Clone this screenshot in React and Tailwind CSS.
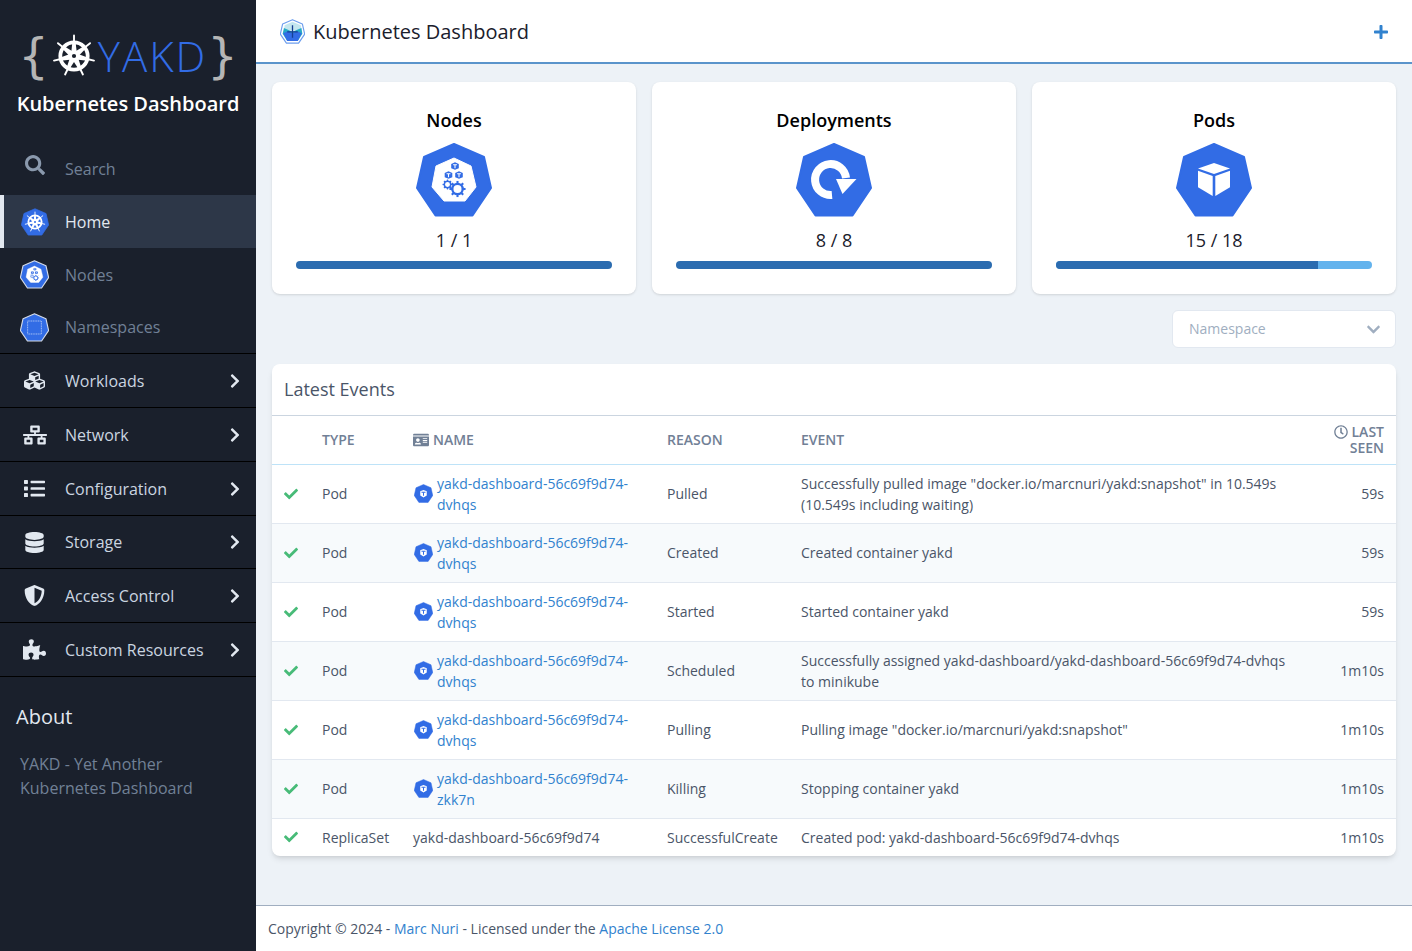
import React from "react";
import { FaSearch, FaCubes, FaNetworkWired, FaList, FaDatabase, FaShieldAlt, FaPuzzlePiece, FaChevronRight, FaCheck, FaIdCard, FaRegClock, FaPlus, FaChevronDown } from "react-icons/fa";

const HEPT = "M38 1 L68 14 L75 45 L56.5 72.5 L19.5 72.5 L1 45 L8 14 Z";
const BLUE = "#326ce5";

function Hept({ className, children, outline }) {
  return (
    <svg viewBox="0 0 76 74" className={className}>
      <path d={HEPT} fill={BLUE} stroke={outline ? "#d5dce8" : BLUE} strokeWidth={outline ? 3 : 2} strokeLinejoin="round" />
      {children}
    </svg>
  );
}

function Wheel({ cx, cy, r, color = "#fff", hole = BLUE }) {
  const spokes = [0, 1, 2, 3, 4, 5, 6].map((i) => {
    const a = (i * 2 * Math.PI) / 7 - Math.PI / 2;
    return { x: Math.cos(a), y: Math.sin(a), px: -Math.sin(a), py: Math.cos(a) };
  });
  return (
    <g strokeLinecap="round">
      <circle cx={cx} cy={cy} r={r * 0.72} fill="none" stroke={color} strokeWidth={r * 0.2} />
      {spokes.map((s, i) => (
        <g key={i}>
          <path
            fill={color}
            d={`M${cx + s.px * r * 0.17} ${cy + s.py * r * 0.17} L${cx + s.x * r * 0.75 + s.px * r * 0.08} ${cy + s.y * r * 0.75 + s.py * r * 0.08} L${cx + s.x * r * 0.75 - s.px * r * 0.08} ${cy + s.y * r * 0.75 - s.py * r * 0.08} L${cx - s.px * r * 0.17} ${cy - s.py * r * 0.17} Z`}
          />
          <line x1={cx + s.x * r * 0.7} y1={cy + s.y * r * 0.7} x2={cx + s.x * r * 1.08} y2={cy + s.y * r * 1.08} stroke={color} strokeWidth={r * 0.1} />
        </g>
      ))}
      <circle cx={cx} cy={cy} r={r * 0.3} fill={color} />
      <circle cx={cx} cy={cy} r={r * 0.11} fill={hole} />
    </g>
  );
}

function Gear({ cx, cy, r }) {
  const teeth = [0, 1, 2, 3, 4, 5, 6, 7];
  return (
    <g stroke={BLUE} fill="none">
      <circle cx={cx} cy={cy} r={r} strokeWidth={r * 0.45} />
      {teeth.map((i) => {
        const a = (i * Math.PI) / 4;
        return <line key={i} x1={cx + Math.cos(a) * r} y1={cy + Math.sin(a) * r} x2={cx + Math.cos(a) * r * 1.55} y2={cy + Math.sin(a) * r * 1.55} strokeWidth={r * 0.4} />;
      })}
    </g>
  );
}

function Cube({ cx, cy, s }) {
  return (
    <g>
      <path d={`M${cx} ${cy - s} L${cx + s} ${cy - s * 0.5} L${cx + s} ${cy + s * 0.6} L${cx} ${cy + s} L${cx - s} ${cy + s * 0.6} L${cx - s} ${cy - s * 0.5} Z`} fill={BLUE} />
      <path d={`M${cx - s * 0.5} ${cy - s * 0.35} H${cx + s * 0.5} M${cx} ${cy - s * 0.35} V${cy + s * 0.6}`} stroke="#fff" strokeWidth={s * 0.28} fill="none" />
    </g>
  );
}

function NodeInner() {
  return (
    <g>
      <path d="M38 15 L55 23 L60 44 L49 58 L28 58 L16 44 L20 23 Z" fill="#fff" stroke="#fff" strokeLinejoin="round" />
      <Cube cx={39} cy={23} s={3.8} />
      <Cube cx={32.5} cy={32} s={3.8} />
      <Cube cx={43} cy={32} s={3.8} />
      <Gear cx={31.5} cy={41.5} r={3.2} />
      <Gear cx={41.5} cy={46} r={5.2} />
    </g>
  );
}

function DeployInner() {
  return (
    <g>
      <path d="M36 52 A15.5 15.5 0 1 1 50 35" fill="none" stroke="#fff" strokeWidth="8" />
      <path d="M40 36 L60.5 36 L46.5 51 Z" fill="#fff" />
    </g>
  );
}

function PodInner() {
  return (
    <g fill="#fff">
      <path d="M38 20 L54 25.5 L38 31 L22 25.5 Z" />
      <path d="M22 27.7 L36.7 33 L36.7 53 L22 44.3 Z" />
      <path d="M54 27.7 L39.3 33 L39.3 53 L54 44.3 Z" />
    </g>
  );
}

function PodSmall() {
  return (
    <svg viewBox="0 0 76 74" className="w-[19px] h-[19px] shrink-0">
      <path d={HEPT} fill={BLUE} stroke={BLUE} strokeWidth="2" strokeLinejoin="round" />
      <g fill="#fff">
        <path d="M38 23 L51 28 L51 45 L38 53 L25 45 L25 28 Z" />
      </g>
      <path d="M30 32 H46 M38 32 V46" stroke={BLUE} strokeWidth="4" fill="none" />
    </svg>
  );
}

function HeaderLogo() {
  return (
    <svg viewBox="0 0 76 74" className="w-[25px] h-[25px]">
      <path d={HEPT} fill="#fff" stroke="#6d9eee" strokeWidth="3.5" strokeLinejoin="round" />
      <path d="M38 7 L63 18 L66 34 L12 34 L14 18 Z" fill="#c3e6ef" />
      <path d="M12 26 L38 38 L65 26 L68 44 L54 66 L22 66 L8 44 Z" fill="#26a9c6" />
      <path d="M10 42 L24 36 L38 42 L52 36 L66 42 L54 66 L22 66 Z" fill={BLUE} />
      <path d="M38 18 V56 M22 38 H54" stroke="#173f94" strokeWidth="4" fill="none" />
    </svg>
  );
}

function LogoWheel() {
  return (
    <svg viewBox="0 0 44 44" className="w-[44px] h-[44px] shrink-0">
      <Wheel cx={22} cy={22} r={19} hole="#1a202c" />
    </svg>
  );
}

function NavLink({ icon, label, active, h = "h-[53px]" }) {
  return (
    <div className={`flex items-center ${h} ${active ? "bg-[#2d3748] border-l-4 border-[#e2e8f0] pl-4" : "pl-5"} `}>
      <div className="w-[29px] flex justify-center items-center shrink-0">{icon}</div>
      <span className={`ml-4 text-base ${active ? "text-[#e2e8f0]" : "text-[#718096]"}`}>{label}</span>
    </div>
  );
}

function NavGroup({ icon, label, h = "h-[54px]" }) {
  return (
    <div className={`flex items-center ${h} pl-5 pr-[13px] border-t border-black`}>
      <div className="w-[29px] flex justify-center items-center shrink-0 text-[#e2e8f0]">{icon}</div>
      <span className="ml-4 text-base text-[#cbd5e0]">{label}</span>
      <FaChevronRight className="ml-auto text-[#e2e8f0] text-[16px]" />
    </div>
  );
}

function Sidebar() {
  return (
    <aside className="w-64 shrink-0 bg-[#1a202c] flex flex-col">
      <div className="pt-[29px] flex flex-col items-center">
        <div className="flex items-center h-[54px] font-['DejaVu_Sans',sans-serif] leading-none">
          <span className="text-[#b5b5b5] text-[48px] font-normal mr-[3px]">{"{"}</span>
          <LogoWheel />
          <span className="text-[#326ce5] text-[42px] font-['Open_Sans',sans-serif] font-light tracking-[2px] ml-[2px]">YAKD</span>
          <span className="text-[#b5b5b5] text-[48px] font-normal">{"}"}</span>
        </div>
        <div className="text-white text-[20px] font-semibold mt-[7px] leading-7">Kubernetes Dashboard</div>
      </div>
      <nav className="mt-[24px]">
        <div className="flex items-center h-[53px] pl-5">
          <div className="w-[29px] flex justify-center"><FaSearch className="text-[#8a99ad] text-[20px] -mt-2" /></div>
          <span className="ml-4 text-base text-[#718096]">Search</span>
        </div>
        <NavLink active label="Home" icon={<Hept className="w-[28px] h-[28px]"><Wheel cx={38} cy={37} r={25} /></Hept>} />
        <NavLink label="Nodes" icon={<Hept outline className="w-[29px] h-[29px]"><NodeInner /></Hept>} />
        <NavLink h="h-[52px]" label="Namespaces" icon={<Hept outline className="w-[29px] h-[29px]"><rect x="20" y="20" width="36" height="34" fill="none" stroke="#a9c2f3" strokeWidth="2.5" strokeDasharray="3 1.5" /></Hept>} />
        <NavGroup label="Workloads" icon={<FaCubes className="text-[21px]" />} />
        <NavGroup label="Network" icon={<FaNetworkWired className="text-[24px]" />} />
        <NavGroup label="Configuration" icon={<FaList className="text-[21px]" />} />
        <NavGroup h="h-[53px]" label="Storage" icon={<FaDatabase className="text-[21px]" />} />
        <NavGroup label="Access Control" icon={<FaShieldAlt className="text-[21px]" />} />
        <NavGroup label="Custom Resources" icon={<FaPuzzlePiece className="text-[23px]" />} />
        <div className="border-t border-black" />
      </nav>
      <div className="px-4 mt-[26px]">
        <h2 className="text-[20px] leading-7 text-[#e2e8f0]">About</h2>
        <p className="mt-[21px] pl-1 text-base leading-6 text-[#718096]">YAKD - Yet Another<br />Kubernetes Dashboard</p>
      </div>
    </aside>
  );
}

function StatCard({ title, value, inner, pct }) {
  return (
    <div className="bg-white rounded-lg shadow-sm h-[212px] px-6 pt-[24px] flex flex-col items-center">
      <div className="text-[18px] leading-7 font-semibold text-black">{title}</div>
      <Hept className="w-[76px] h-[74px] mt-[9px]">{inner}</Hept>
      <div className="text-[18px] leading-7 text-[#1a202c] mt-[9px]">{value}</div>
      <div className="w-full h-2 rounded-full bg-[#63b3ed] mt-[7px] overflow-hidden">
        <div className="h-full bg-[#2b6cb0]" style={{ width: pct + "%" }} />
      </div>
    </div>
  );
}

const NAME = "yakd-dashboard-56c69f9d74-";
const rows = [
  ["Pod", "dvhqs", "Pulled", 'Successfully pulled image "docker.io/marcnuri/yakd:snapshot" in 10.549s (10.549s including waiting)', "59s"],
  ["Pod", "dvhqs", "Created", "Created container yakd", "59s"],
  ["Pod", "dvhqs", "Started", "Started container yakd", "59s"],
  ["Pod", "dvhqs", "Scheduled", "Successfully assigned yakd-dashboard/yakd-dashboard-56c69f9d74-dvhqs to minikube", "1m10s"],
  ["Pod", "dvhqs", "Pulling", 'Pulling image "docker.io/marcnuri/yakd:snapshot"', "1m10s"],
  ["Pod", "zkk7n", "Killing", "Stopping container yakd", "1m10s"],
];

function EventsTable() {
  const th = "px-3 py-0 text-left font-semibold text-[#718096] uppercase align-middle";
  const td = "px-3 py-2 align-middle";
  return (
    <table className="w-full table-fixed border-collapse text-sm leading-[21px] text-[#4a5568]">
      <colgroup>
        <col className="w-[38px]" />
        <col className="w-[91px]" />
        <col className="w-[254px]" />
        <col className="w-[134px]" />
        <col />
        <col className="w-[84px]" />
      </colgroup>
      <thead>
        <tr className="h-[48px] border-b border-[#bee3f8]">
          <th className={th} />
          <th className={th}>Type</th>
          <th className={th}><span className="flex items-center gap-1"><FaIdCard className="text-[#718096] text-base" />Name</span></th>
          <th className={th}>Reason</th>
          <th className={th}>Event</th>
          <th className="px-3 py-0 text-right font-semibold text-[#718096] uppercase leading-4 align-middle">
            <FaRegClock className="inline text-[14px] mr-1 -mt-[3px]" />Last Seen
          </th>
        </tr>
      </thead>
      <tbody>
        {rows.map((r, i) => (
          <tr key={i} className={`border-b border-[#e2e8f0] ${i % 2 === 1 ? "bg-[#f7fafc]" : ""}`}>
            <td className={td}><FaCheck className="text-[#48bb78] text-[14px]" /></td>
            <td className={td}>{r[0]}</td>
            <td className={td}>
              <div className="flex items-center gap-[4px] pl-px">
                <PodSmall />
                <a className="text-[#3182ce]">{NAME + r[1]}</a>
              </div>
            </td>
            <td className={td}>{r[2]}</td>
            <td className={td}>{r[3]}</td>
            <td className={td + " text-right"}>{r[4]}</td>
          </tr>
        ))}
        <tr className="h-[37px]">
          <td className={td}><FaCheck className="text-[#48bb78] text-[14px]" /></td>
          <td className={td}>ReplicaSet</td>
          <td className={td}>yakd-dashboard-56c69f9d74</td>
          <td className={td}>SuccessfulCreate</td>
          <td className={td}>Created pod: yakd-dashboard-56c69f9d74-dvhqs</td>
          <td className={td + " text-right"}>1m10s</td>
        </tr>
      </tbody>
    </table>
  );
}

export default function App() {
  return (
    <div className="flex h-[951px] overflow-hidden bg-[#edf2f7] font-['Open_Sans',sans-serif]">
      <Sidebar />
      <main className="flex-1 min-w-0 flex flex-col">
        <header className="h-[64px] bg-white border-b-2 border-[#5a94cb] flex items-center pl-6 pr-[23px]">
          <HeaderLogo />
          <h1 className="ml-[8px] mt-[2px] text-[20px] leading-7 text-[#1a202c]">Kubernetes Dashboard</h1>
          <FaPlus className="ml-auto mt-[2px] text-[#3182ce] text-[16px]" />
        </header>
        <div className="flex-1 px-4 pt-[18px]">
          <div className="grid grid-cols-3 gap-4">
            <StatCard title="Nodes" value="1 / 1" pct={100} inner={<NodeInner />} />
            <StatCard title="Deployments" value="8 / 8" pct={100} inner={<DeployInner />} />
            <StatCard title="Pods" value="15 / 18" pct={83} inner={<PodInner />} />
          </div>
          <div className="flex justify-end mt-4">
            <div className="w-56 h-[38px] bg-white rounded-md border border-[#e2e8f0] flex items-center pl-4 pr-[14px] text-sm text-[#a0aec0]">
              Namespace
              <FaChevronDown className="ml-auto text-[#a0aec0] text-[15px]" />
            </div>
          </div>
          <section className="mt-4 bg-white rounded-lg shadow-md overflow-hidden">
            <h3 className="h-[52px] flex items-center px-3 text-[18px] text-[#4a5568] border-b border-[#cbd5e0]">Latest Events</h3>
            <EventsTable />
          </section>
        </div>
        <footer className="h-[46px] bg-white border-t border-[#a0aec0] flex items-center px-3 text-sm text-[#4a5568]">
          <span>Copyright © 2024 - <a className="text-[#3182ce]">Marc Nuri</a> - Licensed under the <a className="text-[#3182ce]">Apache License 2.0</a></span>
        </footer>
      </main>
    </div>
  );
}
